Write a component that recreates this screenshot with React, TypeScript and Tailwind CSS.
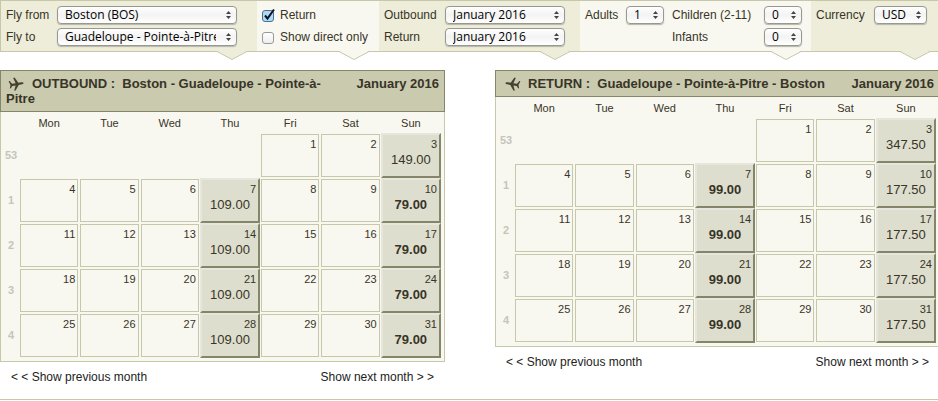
import type { ReactNode } from 'react';

type Fares = Record<number, string>;

type CalendarProps = {
  title: string;
  route: string;
  inbound?: boolean;
  fares: Fares;
  lowest: string;
};

type SelectProps = {
  id: string;
  value: string;
  className: string;
};

const DAYS = ['Mon', 'Tue', 'Wed', 'Thu', 'Fri', 'Sat', 'Sun'];

const WEEKS = [
  { number: 53, days: [0, 0, 0, 0, 1, 2, 3] },
  { number: 1, days: [4, 5, 6, 7, 8, 9, 10] },
  { number: 2, days: [11, 12, 13, 14, 15, 16, 17] },
  { number: 3, days: [18, 19, 20, 21, 22, 23, 24] },
  { number: 4, days: [25, 26, 27, 28, 29, 30, 31] },
];

const OUTBOUND_FARES: Fares = {
  3: '149.00',
  7: '109.00',
  10: '79.00',
  14: '109.00',
  17: '79.00',
  21: '109.00',
  24: '79.00',
  28: '109.00',
  31: '79.00',
};

const RETURN_FARES: Fares = {
  3: '347.50',
  7: '99.00',
  10: '177.50',
  14: '99.00',
  17: '177.50',
  21: '99.00',
  24: '177.50',
  28: '99.00',
  31: '177.50',
};

function Select({ id, value, className }: SelectProps) {
  return (
    <div className={`relative h-[18px] ${className}`}>
      <select
        id={id}
        defaultValue={value}
        className="block h-full w-full appearance-none rounded border border-[#98988f] bg-linear-to-b from-white via-[#f3f3f3] to-white pr-5 pl-[7px] font-['Open_Sans','Noto_Sans',sans-serif] text-xs leading-4 text-black shadow-[0_1px_1px_#b5b5aa]"
      >
        <option>{value}</option>
      </select>
      <svg
        viewBox="0 0 5 8"
        className="pointer-events-none absolute top-[5px] right-[6px] h-2 w-[5px] fill-[#444]"
      >
        <path d="M2.5 0 5 3H0ZM2.5 8 0 5h5Z" />
      </svg>
    </div>
  );
}

function Checkbox({ id, checked }: { id: string; checked?: boolean }) {
  return (
    <span className="relative mt-0.5 size-3">
      <input
        id={id}
        type="checkbox"
        defaultChecked={checked}
        className="peer block size-3 appearance-none rounded-[3px] border border-[#999] bg-linear-to-b from-white to-[#eee] checked:border-[#4d6f94] checked:from-[#b5d5f2] checked:to-[#a8dcf8]"
      />
      <svg
        viewBox="0 0 13 13"
        className="pointer-events-none absolute -top-0.5 left-0 hidden size-[13px] fill-none stroke-[#0b1526] stroke-2 peer-checked:block"
      >
        <path d="M3 7.5 5.5 10.5 12 1.5" />
      </svg>
    </span>
  );
}

function Panel({
  children,
  className,
  shade,
}: {
  children: ReactNode;
  className: string;
  shade: string;
}) {
  return (
    <div className={`relative h-[51px] border-b border-[#c7c7aa] pt-1 pl-[5px] ${shade} ${className}`}>
      {children}
      <svg
        viewBox="0 0 30 9"
        className="absolute right-[10px] -bottom-[9px] h-[9px] w-[30px] fill-current stroke-[#c7c7aa]"
      >
        <path stroke="none" d="M0 0H30L15 8.5Z" />
        <path fill="none" d="M0 .5 15 8.5 30 .5" />
      </svg>
    </div>
  );
}

function Plane({ inbound }: { inbound?: boolean }) {
  return (
    <svg
      viewBox="0 0 16 14"
      className={`inline h-[14px] w-4 fill-[#46402f] align-[-3px] ${inbound ? 'mr-[7px] ml-1 -scale-x-100' : 'mr-2 ml-0.5'}`}
    >
      <path d="M.6 4.2 1.7 4.1 4 6.8 7.6 6.2 5.2 .9 6.6 .6 10.3 5.7 13.4 5.2Q15.3 5 15.6 5.9 15.5 7 13.8 7.3L10.7 7.9 7.6 13.5 6.2 13.7 7.6 8.5 4.4 8.9 2.8 11.3 1.8 11.4 2.5 8Z" />
    </svg>
  );
}

function Calendar({ title, route, inbound, fares, lowest }: CalendarProps) {
  return (
    <section>
      <div className="border border-[#c7c7aa] bg-[#f8f8f0] pr-[3px] pb-[3px]">
        <h2 className="-mt-px -mr-1 -ml-px flex justify-between border border-[#85856a] bg-[#cacaae] px-[5px] py-[5px] text-[13px] leading-[15px] font-bold">
          <span className="max-w-[335px]">
            <Plane inbound={inbound} />
            {`${title} : \u00a0${route}`}
          </span>
          <span>January 2016</span>
        </h2>
        <table className="w-full table-fixed border-separate border-spacing-0">
          <colgroup>
            <col className="w-[18px]" />
          </colgroup>
          <thead>
            <tr>
              <th aria-label="Week" />
              {DAYS.map((day) => (
                <th key={day} className="h-[21px] p-0 text-[11px] leading-4 font-normal">
                  {day}
                </th>
              ))}
            </tr>
          </thead>
          <tbody>
            {WEEKS.map((week) => (
              <tr key={week.number}>
                <th className="h-[45px] p-0 pl-0.5 text-[11px] text-[#c5c5bb]">{week.number}</th>
                {week.days.map((day, index) => {
                  if (!day) return <td key={index} />;
                  const fare = fares[day];
                  return (
                    <td key={index} className={fare ? 'p-0' : 'p-px'}>
                      <div
                        className={
                          fare
                            ? 'h-[45px] border-2 border-t-[#e6e6dc] border-r-[#85856a] border-b-[#85856a] border-l-[#e6e6dc] bg-[#dedece]'
                            : 'h-[43px] border border-[#c7c7aa]'
                        }
                      >
                        <div className="pt-0.5 pr-0.5 text-right text-[11px] leading-[14px]">
                          {day}
                        </div>
                        {fare && (
                          <button
                            className={`block w-full text-center text-[13px] leading-[18px] ${fare === lowest ? 'font-bold' : ''}`}
                          >
                            {fare}
                          </button>
                        )}
                      </div>
                    </td>
                  );
                })}
              </tr>
            ))}
          </tbody>
        </table>
      </div>
      <nav className="flex justify-between px-[11px] pt-[7px] text-xs leading-4 text-[#222]">
        <a href="#previous">&lt; &lt; Show previous month</a>
        <a href="#next">Show next month &gt; &gt;</a>
      </nav>
    </section>
  );
}

export default function App() {
  return (
    <div className="overflow-hidden bg-white font-['Liberation_Sans',Arial,sans-serif] text-[#383428]">
      <div className="min-w-[940px] border-b border-[#c7c7aa] pb-[14px]">
        <form className="flex border-t border-l border-[#c7c7aa] text-xs leading-5">
          <Panel className="w-64" shade="bg-[#ededda] text-[#ededda]">
            <div className="grid grid-cols-[51px_180px] items-center gap-y-0.5 text-[#383428]">
              <label htmlFor="from">Fly from</label>
              <Select id="from" value="Boston (BOS)" className="w-[180px]" />
              <label htmlFor="to">Fly to</label>
              <Select id="to" value="Guadeloupe - Pointe-à-Pitre" className="w-[180px]" />
            </div>
          </Panel>
          <Panel className="w-[122px]" shade="bg-[#f8f8f0] text-[#f8f8f0]">
            <div className="grid grid-cols-[18px_auto] items-center gap-y-0.5 text-[#383428]">
              <Checkbox id="return" checked />
              <label htmlFor="return">Return</label>
              <Checkbox id="direct" />
              <label htmlFor="direct">Show direct only</label>
            </div>
          </Panel>
          <Panel className="w-[201px]" shade="bg-[#ededda] text-[#ededda]">
            <div className="grid grid-cols-[61px_120px] items-center gap-y-0.5 text-[#383428]">
              <label htmlFor="outbound-month">Outbound</label>
              <Select id="outbound-month" value="January 2016" className="w-[120px]" />
              <label htmlFor="return-month">Return</label>
              <Select id="return-month" value="January 2016" className="w-[120px]" />
            </div>
          </Panel>
          <Panel className="w-[231px]" shade="bg-[#f8f8f0] text-[#f8f8f0]">
            <div className="grid grid-cols-[41px_46px_92px_38px] items-center gap-y-0.5 text-[#383428]">
              <label htmlFor="adults">Adults</label>
              <Select id="adults" value="1" className="w-[38px]" />
              <label htmlFor="children">Children (2-11)</label>
              <Select id="children" value="0" className="w-[38px]" />
              <label htmlFor="infants" className="col-start-3">
                Infants
              </label>
              <Select id="infants" value="0" className="w-[38px]" />
            </div>
          </Panel>
          <Panel className="grow" shade="bg-[#ededda] text-[#ededda]">
            <div className="grid grid-cols-[58px_53px] items-center text-[#383428]">
              <label htmlFor="currency">Currency</label>
              <Select id="currency" value="USD" className="w-[53px]" />
            </div>
          </Panel>
        </form>
        <main className="mt-[18px] grid grid-cols-2 items-start gap-[50px]">
          <Calendar
            title="OUTBOUND"
            route="Boston - Guadeloupe - Pointe-à-Pitre"
            fares={OUTBOUND_FARES}
            lowest="79.00"
          />
          <Calendar
            title="RETURN"
            route="Guadeloupe - Pointe-à-Pitre - Boston"
            inbound
            fares={RETURN_FARES}
            lowest="99.00"
          />
        </main>
      </div>
    </div>
  );
}
